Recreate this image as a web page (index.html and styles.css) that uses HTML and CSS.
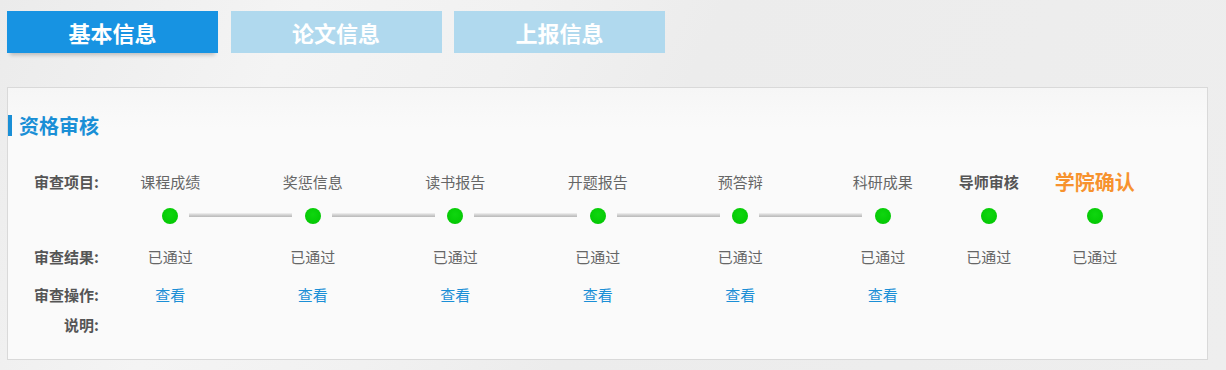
FILE: index.html
```html
<!DOCTYPE html>
<html lang="zh-CN">
<head>
    <meta charset="UTF-8">
    <title>资格审核</title>
    <link rel="stylesheet" href="styles.css">
</head>
<body>
    <div class="tabs">
        <div class="tab active">基本信息</div>
        <div class="tab">论文信息</div>
        <div class="tab">上报信息</div>
    </div>

    <div class="panel">
        <h2 class="panel-title">资格审核</h2>

        <div class="review-grid">
            <!-- row 1: items -->
            <div class="row-label">审查项目:</div>
            <div class="item-name">课程成绩</div>
            <div class="item-name">奖惩信息</div>
            <div class="item-name">读书报告</div>
            <div class="item-name">开题报告</div>
            <div class="item-name">预答辩</div>
            <div class="item-name">科研成果</div>
            <div class="item-name strong">导师审核</div>
            <div class="item-name college">学院确认</div>

            <!-- row 2: progress dots -->
            <div></div>
            <div class="step linked"><span class="dot"></span></div>
            <div class="step linked"><span class="dot"></span></div>
            <div class="step linked"><span class="dot"></span></div>
            <div class="step linked"><span class="dot"></span></div>
            <div class="step linked"><span class="dot"></span></div>
            <div class="step"><span class="dot"></span></div>
            <div class="step"><span class="dot"></span></div>
            <div class="step"><span class="dot"></span></div>

            <!-- row 3: results -->
            <div class="row-label">审查结果:</div>
            <div class="result">已通过</div>
            <div class="result">已通过</div>
            <div class="result">已通过</div>
            <div class="result">已通过</div>
            <div class="result">已通过</div>
            <div class="result">已通过</div>
            <div class="result">已通过</div>
            <div class="result">已通过</div>

            <!-- row 4: actions -->
            <div class="row-label">审查操作:</div>
            <div class="action"><a href="#">查看</a></div>
            <div class="action"><a href="#">查看</a></div>
            <div class="action"><a href="#">查看</a></div>
            <div class="action"><a href="#">查看</a></div>
            <div class="action"><a href="#">查看</a></div>
            <div class="action"><a href="#">查看</a></div>
            <div class="action"></div>
            <div class="action"></div>

            <!-- row 5: notes -->
            <div class="row-label">说明:</div>
        </div>
    </div>
</body>
</html>
```

FILE: styles.css
```css
body {
    margin: 0;
    padding: 11px 18px 0 7px;
    height: 359px;
    font-family: "Noto Sans CJK SC", "Liberation Sans", sans-serif;
    background: linear-gradient(115deg, #ebebeb 0%, #f4f4f4 22%, #f1f1f1 38%, #ececec 52%, #eeeeee 100%);
    color: #666;
}
.tabs {
    display: flex;
    gap: 12.5px;
}
.tab {
    width: 211px;
    height: 42px;
    line-height: 42px;
    text-align: center;
    font-size: 22px;
    font-weight: bold;
    color: #fff;
    background-color: #b0d9ee;
}
.tab.active {
    background-color: #1793e2;
    box-shadow: 0 5px 4px -3px rgba(0,0,0,0.22);
}
.panel {
    margin-top: 34px;
    height: 271px;
    border: 1px solid #d9d9d9;
    background: linear-gradient(#f6f6f6, #fafafa 40px, #fafafa);
}
.panel-title {
    margin: 27px 0 0;
    height: 21px;
    line-height: 21px;
    padding-left: 7px;
    border-left: 4px solid #1a8fd6;
    font-size: 20px;
    font-weight: bold;
    color: #1a8fd6;
}
.review-grid {
    margin-top: 30px;
    display: grid;
    grid-template-columns: 91px repeat(6, 142.5px) 69.5px 142.5px;
    grid-template-rows: 30px 40px 40px 36px 24px;
    font-size: 15px;
}
.review-grid > div {
    display: flex;
    align-items: center;
    justify-content: center;
    white-space: nowrap;
}
.review-grid > .row-label {
    justify-content: flex-end;
    font-weight: bold;
    color: #555;
    grid-column: 1;
}
.item-name.strong {
    font-weight: bold;
    color: #555;
}
.item-name.college {
    font-size: 20px;
    font-weight: bold;
    color: #f7922e;
}
.step {
    position: relative;
}
.dot {
    width: 16px;
    height: 16px;
    border-radius: 50%;
    background: radial-gradient(circle at 50% 40%, #0fd60f, #00c400);
}
.step.linked::after {
    content: "";
    position: absolute;
    left: calc(50% + 19px);
    top: 17px;
    width: 103px;
    height: 4px;
    background: linear-gradient(#f2f2f2, #d0d0d0 50%, #b9b9b9);
}
.result {
    color: #666;
}
.action a {
    color: #1b8fd6;
    text-decoration: none;
}
```
